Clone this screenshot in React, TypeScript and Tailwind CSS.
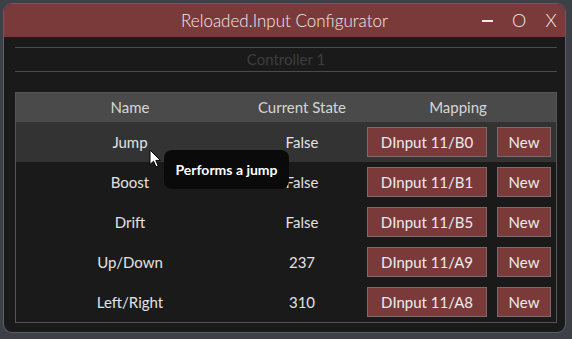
const rows = [
  { name: "Jump", state: "False", mapping: "DInput 11/B0" },
  { name: "Boost", state: "False", mapping: "DInput 11/B1" },
  { name: "Drift", state: "False", mapping: "DInput 11/B5" },
  { name: "Up/Down", state: "237", mapping: "DInput 11/A9" },
  { name: "Left/Right", state: "310", mapping: "DInput 11/A8" },
];

const Cursor = () => (
  <svg width="13" height="19" viewBox="0 0 13 19" className="absolute left-[149px] top-[149px]">
    <path
      d="M1 1 L1 15.5 L4.5 12.2 L7 17.8 L9.2 16.8 L6.8 11.4 L11.4 11.4 Z"
      fill="#ffffff"
      stroke="#000000"
      strokeWidth="1"
      strokeLinejoin="round"
    />
  </svg>
);

const App = () => {
  return (
    <div
      className="relative h-[339px] w-[572px] bg-[#3d4147] p-[4px]"
      style={{ fontFamily: "Lato, 'Open Sans', sans-serif" }}
    >
      <div className="flex h-[328px] w-[561px] flex-col overflow-hidden rounded-[8px] bg-[#1a1a1a] ring-1 ring-[#5b6068]">
        <div className="relative flex h-[33px] shrink-0 items-center justify-center bg-[#7b3a3a]">
          <span className="text-[17px] font-light text-[#ececec]">Reloaded.Input Configurator</span>
          <div className="absolute right-[8px] top-0 flex h-full items-center text-[18px] font-light text-[#ececec]">
            <div className="mr-[19px] h-[2px] w-[11px] bg-[#ececec]" />
            <span className="mr-[20px] w-[13px] text-center">O</span>
            <span className="w-[12px] text-center">X</span>
          </div>
        </div>

        <div className="flex flex-1 flex-col pl-[11px] pr-[8px] pt-[10px]">
          <div className="flex h-[25px] items-center justify-center border-y border-[#4a4a4a] text-[15px] text-[#3e3e3e]">
            Controller 1
          </div>

          <div className="mt-[20px] border border-[#555555] text-[15px] text-[#e2e2e2]">
            <div className="grid h-[29px] grid-cols-[228px_116px_1fr] items-center bg-[#4a4a4a] text-[#d6d6d6]">
              <div className="text-center">Name</div>
              <div className="text-center">Current State</div>
              <div className="text-center">Mapping</div>
            </div>
            {rows.map((r, i) => (
              <div
                key={r.name}
                className={`grid h-[40px] grid-cols-[228px_116px_1fr] items-center ${i === 0 ? "bg-[#333333]" : ""}`}
              >
                <div className="text-center">{r.name}</div>
                <div className="text-center">{r.state}</div>
                <div className="flex items-center gap-[10px] pl-[7px]">
                  <button className="h-[30px] w-[120px] border border-[#7d6a6a] bg-[#7b3a3a] text-[#ececec]">
                    {r.mapping}
                  </button>
                  <button className="h-[30px] w-[54px] border border-[#7d6a6a] bg-[#7b3a3a] text-[#ececec]">
                    New
                  </button>
                </div>
              </div>
            ))}
          </div>
        </div>
      </div>

      <div className="absolute left-[164px] top-[150px] flex h-[39px] w-[125px] items-center justify-center rounded-[8px] bg-[#0a0a0a] text-[14px] font-bold text-white">
        Performs a jump
      </div>
      <Cursor />
    </div>
  );
};

export default App;
